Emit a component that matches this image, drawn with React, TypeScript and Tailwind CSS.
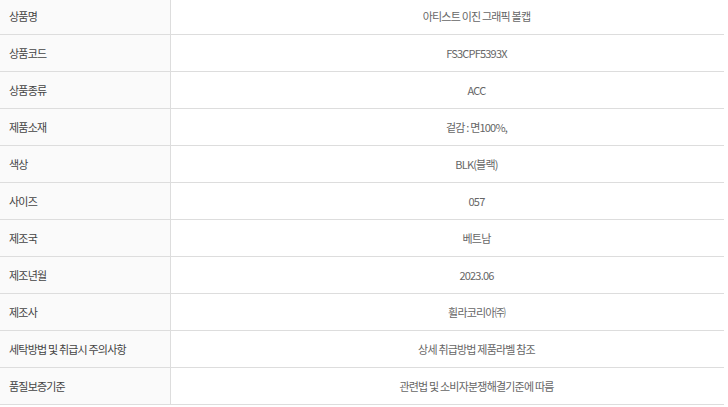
const rows: [string, string][] = [
  ["상품명", "아티스트 이진 그래픽 볼캡"],
  ["상품코드", "FS3CPF5393X"],
  ["상품종류", "ACC"],
  ["제품소재", "겉감 : 면100%,"],
  ["색상", "BLK(블랙)"],
  ["사이즈", "057"],
  ["제조국", "베트남"],
  ["제조년월", "2023.06"],
  ["제조사", "휠라코리아㈜"],
  ["세탁방법 및 취급시 주의사항", "상세 취급방법 제품라벨 참조"],
  ["품질보증기준", "관련법 및 소비자분쟁해결기준에 따름"],
];

export default function App() {
  return (
    <div
      className="h-[407px] w-[728px] overflow-hidden bg-white"
      style={{ fontFamily: '"Noto Sans CJK KR", "Noto Sans", sans-serif' }}
    >
      <div className="-mt-[3px] w-[724px] border-t border-[#ddd]">
        {rows.map(([label, value]) => (
          <div
            key={label}
            className="grid h-[37px] grid-cols-[171px_1fr] border-b border-[#ddd] text-[11px] leading-none tracking-[-0.8px]"
          >
            <div className="flex items-center border-r border-[#ddd] bg-[#fafafa] pl-[9px] text-[#444]">
              {label}
            </div>
            <div className="flex items-center justify-center pl-[58px] text-[#666]">
              {value}
            </div>
          </div>
        ))}
      </div>
    </div>
  );
}
